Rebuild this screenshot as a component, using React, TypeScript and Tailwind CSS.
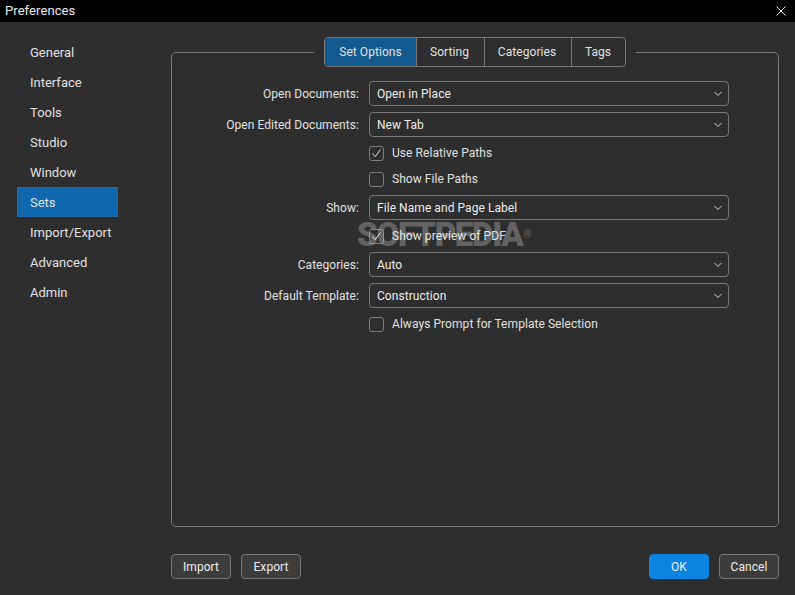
import React from "react";

const navItems = ["General", "Interface", "Tools", "Studio", "Window", "Sets", "Import/Export", "Advanced", "Admin"];
const tabs = [
  { label: "Set Options", w: "w-[91px]", active: true },
  { label: "Sorting", w: "w-[68px] pr-[2px]" },
  { label: "Categories", w: "w-[87px] pr-[2px]" },
  { label: "Tags", w: "w-[54px] pr-[1px]" },
];

function Chevron() {
  return (
    <svg width="10" height="6" viewBox="0 0 10 6" fill="none" className="absolute right-[5px] top-[9px]">
      <path d="M1.5 1l3.5 3.5L8.5 1" stroke="#d8d8d8" strokeWidth="1" />
    </svg>
  );
}

function SelectRow({ label, value, mb }: { label: string; value: string; mb: string }) {
  return (
    <div className={`flex items-center ${mb}`}>
      <div className="w-[187px] text-right text-[12px] tracking-[0.06px] text-[#e0e0e0]">{label}</div>
      <div className="relative ml-[10px] flex h-[25px] w-[360px] items-center rounded-[4px] border border-[#777777] pl-[7px] text-[12px] tracking-[0.06px] text-[#ececec]">
        {value}
        <Chevron />
      </div>
    </div>
  );
}

function CheckRow({ label, checked, mb }: { label: string; checked?: boolean; mb: string }) {
  return (
    <div className={`ml-[197px] flex h-[16px] items-center ${mb}`}>
      <div className="flex h-[15px] w-[15px] items-center justify-center rounded-[3px] border border-[#7d7d7d]">
        {checked && (
          <svg width="11" height="11" viewBox="0 0 11 11" fill="none">
            <path d="M1.5 5.5l2.7 3.2L9.5 1.5" stroke="#e0e0e0" strokeWidth="1" />
          </svg>
        )}
      </div>
      <span className="ml-2 text-[12px] tracking-[0.06px] text-[#e0e0e0]">{label}</span>
    </div>
  );
}

function Btn({ label, primary }: { label: string; primary?: boolean }) {
  return (
    <div
      className={`flex h-[25px] w-[60px] items-center justify-center rounded-[4px] border text-[12px] tracking-[0.06px] ${
        primary ? "border-[#0a84e0] bg-[#0a84e0] text-[#f0f0f0]" : "border-[#777777] bg-[#3c3c3c] text-[#ececec]"
      }`}
    >
      {label}
    </div>
  );
}

export default function App() {
  return (
    <div className="relative flex h-[595px] w-[795px] flex-col overflow-hidden bg-[#2e2e2e] font-['Roboto',sans-serif]">
      <div className="flex h-[22px] shrink-0 items-center justify-between bg-black pl-[5px] pr-[9px] text-[13px] tracking-[0.08px] text-[#ececec]">
        <span>Preferences</span>
        <svg width="10" height="10" viewBox="0 0 10 10" fill="none">
          <path d="M.5.5l9 9M9.5.5l-9 9" stroke="#e8e8e8" strokeWidth="1" />
        </svg>
      </div>
      <div className="flex min-h-0 flex-1">
        <nav className="flex w-[171px] shrink-0 flex-col pl-[17px] pt-[15px]">
          {navItems.map((n) => (
            <div
              key={n}
              className={`flex h-[30px] w-[101px] items-center pt-[1px] text-[13px] text-[#e0e0e0] ${
                n === "Sets" ? "border border-[#1f6aa8] bg-[#0f68ad] pl-[12px] pt-[2px]" : "pl-[13px]"
              }`}
            >
              {n}
            </div>
          ))}
        </nav>
        <div className="flex w-[608px] flex-col">
          <div className="relative mt-[30px] h-[475px] rounded-[5px] border border-[#7a7a7a] pt-[28px]">
            <div className="absolute left-[142px] top-[-16px] flex bg-[#2e2e2e] px-[10px]">
              <div className="flex h-[30px] overflow-hidden rounded-[4px] border border-[#777777]">
                {tabs.map((t, i) => (
                  <div
                    key={t.label}
                    className={`flex items-center justify-center text-[12px] tracking-[0.06px] ${t.w} ${i > 0 ? "border-l border-[#777777]" : ""} ${
                      t.active ? "bg-[#145a8e] text-[#e0e0e0]" : "text-[#e0e0e0]"
                    }`}
                  >
                    {t.label}
                  </div>
                ))}
              </div>
            </div>
            <SelectRow label="Open Documents:" value="Open in Place" mb="mb-[6px]" />
            <SelectRow label="Open Edited Documents:" value="New Tab" mb="mb-[8px]" />
            <CheckRow label="Use Relative Paths" checked mb="mb-[10px]" />
            <CheckRow label="Show File Paths" mb="mb-[8px]" />
            <SelectRow label="Show:" value="File Name and Page Label" mb="mb-[8px]" />
            <CheckRow label="Show preview of PDF" checked mb="mb-[8px]" />
            <SelectRow label="Categories:" value="Auto" mb="mb-[6px]" />
            <SelectRow label="Default Template:" value="Construction" mb="mb-[8px]" />
            <CheckRow label="Always Prompt for Template Selection" mb="" />
          </div>
          <div className="mt-[27px] flex items-center">
            <Btn label="Import" />
            <div className="ml-[10px]">
              <Btn label="Export" />
            </div>
            <div className="ml-auto flex gap-[10px]">
              <Btn label="OK" primary />
              <Btn label="Cancel" />
            </div>
          </div>
        </div>
      </div>
      <div className="pointer-events-none absolute left-[357px] top-[215px] text-[33px] font-black leading-[40px] tracking-[-1.25px] text-white opacity-25">
        SOFTPEDIA<span className="ml-[1px] align-top text-[10px] font-normal">®</span>
      </div>
    </div>
  );
}
